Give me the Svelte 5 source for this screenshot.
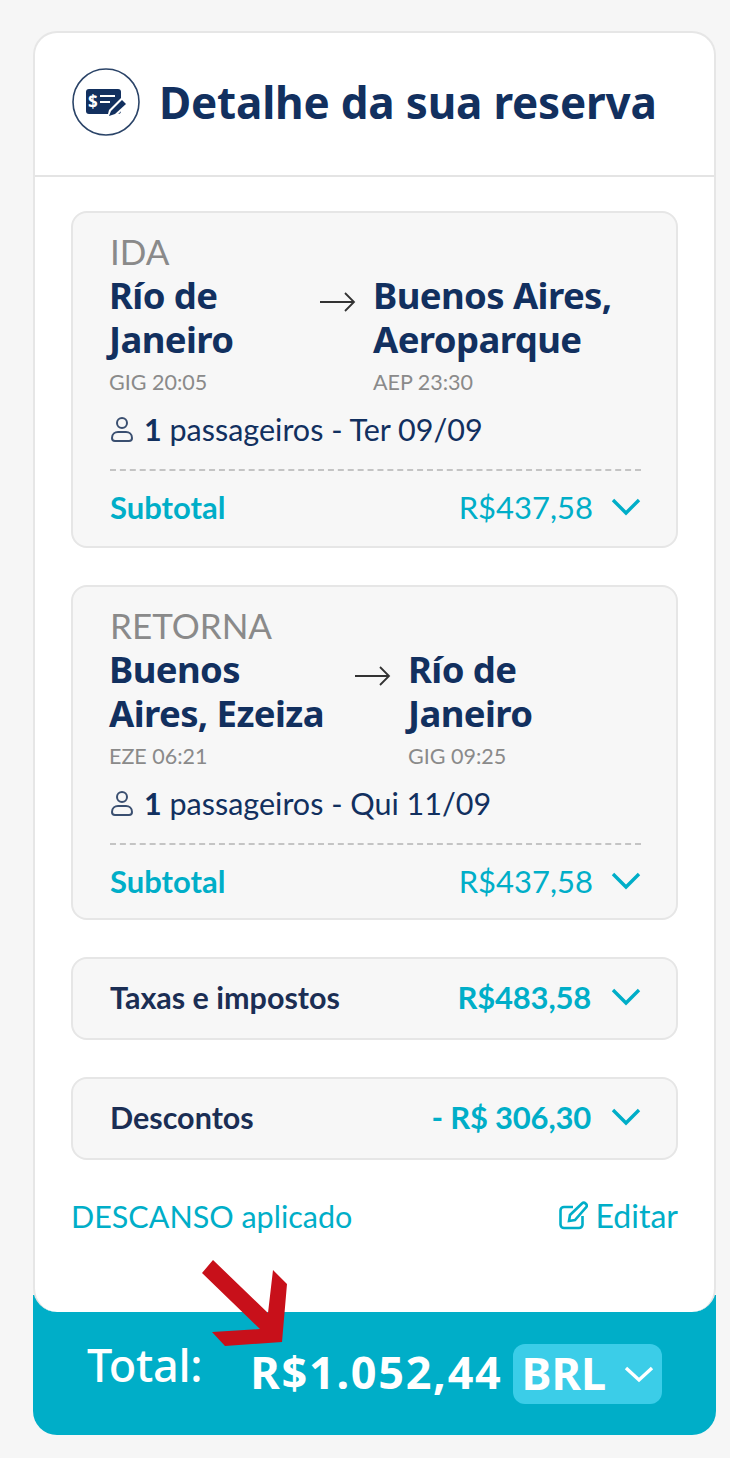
<script lang="ts">
  const legs = [
    {
      label: "IDA",
      from: ["Río de", "Janeiro"],
      fromCode: "GIG 20:05",
      to: ["Buenos Aires,", "Aeroparque"],
      toCode: "AEP 23:30",
      date: "Ter 09/09",
      price: "R$437,58",
      fromWidth: 211,
    },
    {
      label: "RETORNA",
      from: ["Buenos", "Aires, Ezeiza"],
      fromCode: "EZE 06:21",
      to: ["Río de", "Janeiro"],
      toCode: "GIG 09:25",
      date: "Qui 11/09",
      price: "R$437,58",
      fromWidth: 246,
    },
  ];

  const extras = [
    { label: "Taxas e impostos", value: "R$483,58" },
    { label: "Descontos", value: "- R$ 306,30" },
  ];
</script>

{#snippet chevron()}
  <svg class="chevron" viewBox="0 0 30 20" width="30" height="20" aria-hidden="true">
    <path d="M2 3 L15 16 L28 3" fill="none" stroke="currentColor" stroke-width="3.4" />
  </svg>
{/snippet}

<main class="page">
  <section class="card">
    <div class="sheet">
      <header class="header">
        <svg class="header-icon" viewBox="0 0 70 70" width="70" height="70" aria-hidden="true">
          <circle cx="35" cy="35" r="33" fill="#fff" stroke="#2b4468" stroke-width="1.6" />
          <rect x="15" y="22" width="35" height="25" rx="3" fill="#12305f" />
          <path d="M29 29h15M29 35h10" stroke="#fff" stroke-width="2" />
          <text x="17" y="41" class="dollar">$</text>
          <path d="M36 51 L38 43 L51 30 L58 37 L45 49 Z" fill="#fff" />
          <path d="M38 49 L40 44 L51 33 L55 37 L44 47 Z" fill="#12305f" />
        </svg>
        <h1>Detalhe da sua reserva</h1>
      </header>

      <div class="content">
        {#each legs as leg}
          <article class="box leg">
            <div class="leg-label">{leg.label}</div>
            <div class="route">
              <div class="place" style="width: {leg.fromWidth}px">
                {#each leg.from as line}
                  <div class="city">{line}</div>
                {/each}
                <div class="code">{leg.fromCode}</div>
              </div>
              <svg class="route-arrow" viewBox="0 0 36 22" width="36" height="22" aria-hidden="true">
                <path d="M0 11h34M25 2l9 9-9 9" fill="none" stroke="#333" stroke-width="1.8" />
              </svg>
              <div class="place to">
                {#each leg.to as line}
                  <div class="city">{line}</div>
                {/each}
                <div class="code">{leg.toCode}</div>
              </div>
            </div>
            <div class="passengers">
              <svg class="person" viewBox="0 0 24 26" width="24" height="26" aria-hidden="true">
                <circle cx="12" cy="7" r="5" fill="none" stroke="#3a4f70" stroke-width="2" />
                <path d="M2 22c0-4 3-6 6-6h8c3 0 6 2 6 6 0 2-1 3-3 3H5c-2 0-3-1-3-3z" fill="none" stroke="#3a4f70" stroke-width="2" />
              </svg>
              <span><b>1</b> passageiros - {leg.date}</span>
            </div>
            <div class="subtotal">
              <span class="subtotal-label">Subtotal</span>
              <span class="amount">{leg.price}{@render chevron()}</span>
            </div>
          </article>
        {/each}

        {#each extras as extra}
          <div class="box extra">
            <span class="extra-label">{extra.label}</span>
            <span class="amount strong">{extra.value}{@render chevron()}</span>
          </div>
        {/each}

        <div class="applied">
          <span>DESCANSO aplicado</span>
          <span class="edit">
            <svg viewBox="0 0 30 30" width="30" height="30" aria-hidden="true">
              <path d="M15 6H6a3.500 3.500 0 0 0-3.500 3.500v14A3.500 3.500 0 0 0 6 27h15a3.500 3.500 0 0 0 3.500-3.500V15" fill="none" stroke="currentColor" stroke-width="2.600" />
              <path d="M11 20l1-6L24 2.500a2.500 2.500 0 0 1 3.500 0l.5.5a2.500 2.500 0 0 1 0 3.500L17 19z" fill="none" stroke="currentColor" stroke-width="2.600" />
            </svg>
            Editar
          </span>
        </div>
      </div>
    </div>

    <footer class="footer">
      <span class="total-label">Total:</span>
      <span class="total-value">R$1.052,44</span>
      <span class="currency"><span class="currency-code">BRL</span>
        <svg viewBox="0 0 30 20" width="30" height="20" aria-hidden="true">
          <path d="M2 4 L15 16 L28 4" fill="none" stroke="#fff" stroke-width="3.4" />
        </svg>
      </span>
    </footer>

    <svg class="callout" viewBox="0 0 90 90" width="90" height="90" aria-hidden="true">
      <path d="M11 0 L66 53 L71 10 L85 24 L80 82 L23 86 L10 72 L58 69 L0 13 Z" fill="#c8101a" />
    </svg>
  </section>
</main>

<style>
  :global(body) {
    margin: 0;
    background: #f6f6f6;
  }
  .page {
    padding: 31px 14px 24px 33px;
    font-family: Lato, "Liberation Sans", sans-serif;
    color: #12305f;
  }
  .card {
    position: relative;
    width: 683px;
    height: 1404px;
    background: linear-gradient(to bottom, transparent 90%, #00aec8 90%);
    border-radius: 24px;
    display: flex;
    flex-direction: column;
  }
  .sheet {
    background: #fff;
    border: 2px solid #e6e6e6;
    border-bottom: none;
    border-radius: 24px;
    height: 1281px;
    box-sizing: border-box;
    overflow: hidden;
  }
  .header {
    height: 144px;
    box-sizing: border-box;
    border-bottom: 2px solid #e4e4e4;
    display: flex;
    align-items: center;
    gap: 18px;
    padding: 0 0 4px 36px;
  }
  .dollar {
    font: 700 17px "Noto Sans", sans-serif;
    fill: #fff;
  }
  h1 {
    margin: 0;
    font: 700 44px/1 "Noto Sans", sans-serif;
    color: #12305f;
    letter-spacing: -0.2px;
  }
  .content {
    padding: 34px 36px 0 36px;
    display: flex;
    flex-direction: column;
    gap: 37px;
  }
  .box {
    background: #f7f7f7;
    border: 2px solid #e6e6e6;
    border-radius: 16px;
    box-sizing: border-box;
    padding: 0 35px 0 37px;
  }
  .leg {
    height: 337px;
    padding-top: 17px;
  }
  .leg + .leg {
    height: 335px;
  }
  .leg-label {
    font-size: 35px;
    line-height: 43px;
    color: #8a8a8a;
  }
  .route {
    display: flex;
    align-items: flex-start;
    margin-left: -1px;
  }
  .place {
    flex: none;
  }
  .place.to {
    width: 250px;
  }
  .route-arrow {
    flex: none;
    margin-top: 18px;
    margin-right: 17px;
  }
  .city {
    font: 700 36.500px/44px "Noto Sans", sans-serif;
    letter-spacing: -0.6px;
    color: #12305f;
  }
  .code {
    font-size: 21.500px;
    line-height: 30px;
    color: #8a8a8a;
    margin-top: 6px;
  }
  .passengers {
    display: flex;
    align-items: center;
    gap: 10px;
    margin-top: 12px;
    font-size: 30.500px;
    line-height: 40px;
  }
  .passengers b {
    font-weight: 700;
  }
  .person {
    flex: none;
  }
  .subtotal {
    margin-top: 20px;
    padding-top: 16px;
    border-top: 2px dashed #c4c4c4;
    display: flex;
    justify-content: space-between;
    align-items: center;
    font-size: 31px;
    line-height: 40px;
    color: #00aec8;
  }
  .subtotal-label {
    font-weight: 700;
  }
  .amount {
    display: inline-flex;
    align-items: center;
    gap: 18px;
    color: #00aec8;
  }
  .amount.strong {
    font-size: 31px;
    font-weight: 700;
    letter-spacing: -0.2px;
    gap: 20px;
  }
  .chevron {
    flex: none;
  }
  .extra {
    height: 83px;
    display: flex;
    justify-content: space-between;
    align-items: center;
    padding-bottom: 3px;
    font-size: 30.500px;
  }
  .extra-label {
    font-weight: 700;
    color: #1b2e54;
  }
  .applied {
    display: flex;
    justify-content: space-between;
    align-items: center;
    margin-top: -3px;
    font-size: 30.500px;
    line-height: 44px;
    color: #00aec8;
  }
  .edit {
    display: inline-flex;
    align-items: center;
    gap: 8px;
    font-size: 32px;
  }
  .footer {
    flex: 1;
    display: flex;
    align-items: center;
    padding: 0 54px;
    color: #fff;
  }
  .total-label {
    font: 500 45px/1 "Noto Sans", sans-serif;
    letter-spacing: -0.3px;
    width: 164px;
    margin-bottom: 18px;
  }
  .total-value {
    font: 700 45px/1 "Noto Sans", sans-serif;
    letter-spacing: 1.700px;
    margin-bottom: 4px;
  }
  .currency {
    display: inline-flex;
    align-items: center;
    justify-content: space-between;
    box-sizing: border-box;
    width: 150px;
    height: 60px;
    padding: 0 8px 0 9px;
    margin-left: 10px;
    background: #3bcde8;
    border-radius: 12px;
    font: 700 45px/1 "Noto Sans", sans-serif;
  }
  .currency-code {
    margin-bottom: 3px;
  }
  .callout {
    position: absolute;
    left: 169px;
    top: 1229px;
  }
</style>
